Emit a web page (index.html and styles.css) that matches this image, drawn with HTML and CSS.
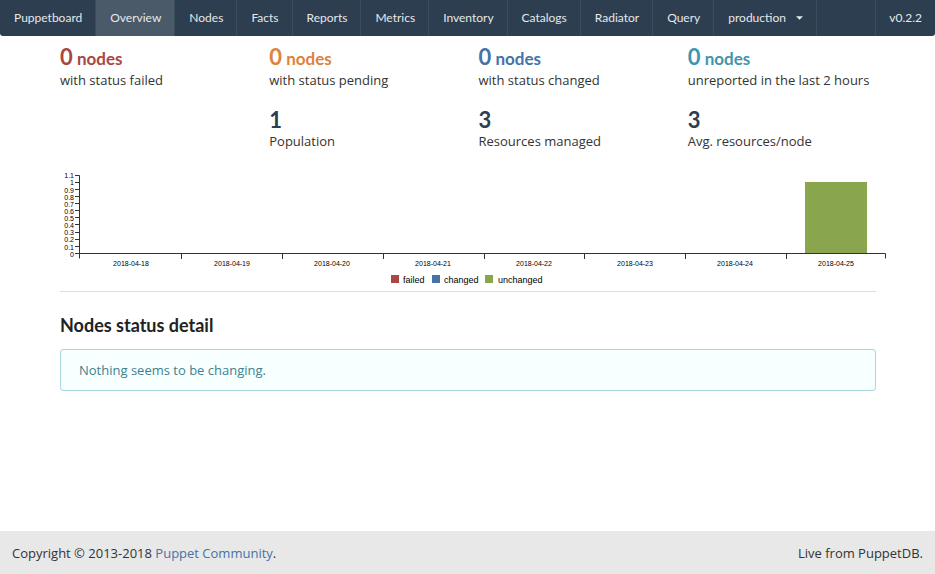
FILE: index.html
```html
<!DOCTYPE html>
<html lang="en">
<head>
<meta charset="utf-8">
<meta name="viewport" content="width=device-width, initial-scale=1">
<title>Puppetboard</title>
<link rel="stylesheet" href="styles.css">
</head>
<body>
<nav class="menu">
  <a class="item" href="#">Puppetboard</a>
  <a class="item active" href="#">Overview</a>
  <a class="item" href="#">Nodes</a>
  <a class="item" href="#">Facts</a>
  <a class="item" href="#">Reports</a>
  <a class="item" href="#">Metrics</a>
  <a class="item" href="#">Inventory</a>
  <a class="item" href="#">Catalogs</a>
  <a class="item" href="#">Radiator</a>
  <a class="item" href="#">Query</a>
  <div class="item environment">
    <select class="env-select" aria-label="Environment"><option>production</option></select>
    <svg class="caret" viewBox="0 0 8 4" aria-hidden="true"><path d="M0 0h8L4 4z"/></svg>
  </div>
  <a class="item version" href="#">v0.2.2</a>
</nav>
<main class="container">
  <section class="stats">
    <div class="stat">
      <h1 class="count failed">0<small> nodes</small></h1>
      <span>with status failed</span>
    </div>
    <div class="stat">
      <h1 class="count pending">0<small> nodes</small></h1>
      <span>with status pending</span>
    </div>
    <div class="stat">
      <h1 class="count changed">0<small> nodes</small></h1>
      <span>with status changed</span>
    </div>
    <div class="stat">
      <h1 class="count unreported">0<small> nodes</small></h1>
      <span>unreported in the last 2 hours</span>
    </div>
    <div class="stat population">
      <h1 class="count">1</h1>
      <span>Population</span>
    </div>
    <div class="stat">
      <h1 class="count">3</h1>
      <span>Resources managed</span>
    </div>
    <div class="stat">
      <h1 class="count">3</h1>
      <span>Avg. resources/node</span>
    </div>
  </section>
  <svg class="chart" viewBox="0 0 826 120" role="img" aria-label="Daily node status">
    <rect class="fill-unchanged" x="745" y="11" width="62" height="72"/>
    <path class="axis" d="M15 4.500h4.500V82.500H15M15 11.500h4M15 18.500h4M15 25.500h4M15 32.500h4M15 39.500h4M15 46.500h4M15 53.500h4M15 61.500h4M15 68.500h4M15 75.500h4"/>
    <path class="axis" d="M19.500 87.500V82.500H825.500v5M121.500 83v5M222.500 83v5M323.500 83v5M424.500 83v5M524.500 83v5M625.500 83v5M726.500 83v5"/>
    <g class="tick-label y-label">
      <text x="14" y="7">1.1</text>
      <text x="14" y="14">1</text>
      <text x="14" y="22">0.9</text>
      <text x="14" y="29">0.8</text>
      <text x="14" y="36">0.7</text>
      <text x="14" y="43">0.6</text>
      <text x="14" y="50">0.5</text>
      <text x="14" y="57">0.4</text>
      <text x="14" y="64">0.3</text>
      <text x="14" y="71">0.2</text>
      <text x="14" y="79">0.1</text>
      <text x="14" y="86">0</text>
    </g>
    <g class="tick-label x-label">
      <text x="71" y="95">2018-04-18</text>
      <text x="172" y="95">2018-04-19</text>
      <text x="272" y="95">2018-04-20</text>
      <text x="373" y="95">2018-04-21</text>
      <text x="474" y="95">2018-04-22</text>
      <text x="575" y="95">2018-04-23</text>
      <text x="675" y="95">2018-04-24</text>
      <text x="776" y="95">2018-04-25</text>
    </g>
    <g class="legend">
      <rect class="fill-failed" x="331" y="104" width="8" height="8"/>
      <text x="343" y="112">failed</text>
      <rect class="fill-changed" x="372" y="104" width="8" height="8"/>
      <text x="384" y="112">changed</text>
      <rect class="fill-unchanged" x="425" y="104" width="8" height="8"/>
      <text x="438" y="112">unchanged</text>
    </g>
  </svg>
  <section class="detail">
    <h2 class="heading">Nodes status detail</h2>
    <div class="message">Nothing seems to be changing.</div>
  </section>
</main>
<footer class="footer">
  <span>Copyright © 2013-2018 <a href="#">Puppet Community</a>.</span>
  <span>Live from PuppetDB.</span>
</footer>
</body>
</html>
```
FILE: styles.css
```css
* {
  box-sizing: border-box;
}

body {
  display: flex;
  flex-direction: column;
  min-height: 100vh;
  margin: 0;
  background: #fff;
  color: #333;
  font: 13px/20px "Open Sans", sans-serif;
}

.menu {
  display: flex;
  height: 36px;
  border-radius: 0 0 3px 3px;
  background: #2c3e50;
  font-family: Lato, sans-serif;
  font-size: 12px;
}

.item {
  display: flex;
  align-items: center;
  padding: 0 13px 0 14px;
  border-right: 1px solid #3b4c5d;
  color: #e6e8ea;
  text-decoration: none;
}

.item.active {
  background: #4b5a69;
}

.environment {
  gap: 10px;
}

.env-select {
  appearance: none;
  padding: 0;
  border: 0;
  background: transparent;
  color: inherit;
  font: inherit;
}

.caret {
  width: 7px;
  height: 4px;
  fill: currentColor;
}

.version {
  margin-left: auto;
  padding-left: 13px;
  border-right: 0;
  border-left: 1px solid #3b4c5d;
}

.container {
  flex: 1;
  margin: 0 59px 0 60px;
}

.stats {
  display: grid;
  grid-template-columns: repeat(4, 1fr);
  column-gap: 21px;
  row-gap: 19px;
  padding-top: 10px;
}

.population {
  grid-column: 2;
}

.count {
  margin: 0;
  color: #2c3e50;
  font: bold 22px/22px Lato, sans-serif;
}

.count small {
  font-size: 17px;
}

.count.failed {
  color: #aa4643;
}

.count.pending {
  color: #db843d;
}

.count.changed {
  color: #4572a7;
}

.count.unreported {
  color: #3d96ae;
}

.chart {
  display: block;
  width: calc(100% + 10px);
  margin-top: 20px;
  font-family: "Liberation Sans", sans-serif;
}

.axis {
  fill: none;
  stroke: #333;
}

.tick-label {
  font-size: 7px;
}

.y-label {
  text-anchor: end;
}

.x-label {
  text-anchor: middle;
}

.legend {
  font-size: 9px;
}

.fill-failed {
  fill: #aa4643;
}

.fill-changed {
  fill: #4572a7;
}

.fill-unchanged {
  fill: #89a54e;
}

.detail {
  border-top: 1px solid #ddd;
  padding-top: 22px;
}

.heading {
  margin: 0 0 12px;
  color: #222;
  font: bold 18px/23px Lato, sans-serif;
}

.message {
  padding: 10px 18px;
  border: 1px solid #a9d5de;
  border-radius: 3px;
  background: #f8ffff;
  color: #3f7f91;
}

.footer {
  display: flex;
  justify-content: space-between;
  padding: 12px 12px 11px;
  background: #e8e8e8;
}

.footer a {
  color: #4572a7;
  text-decoration: none;
}
```
